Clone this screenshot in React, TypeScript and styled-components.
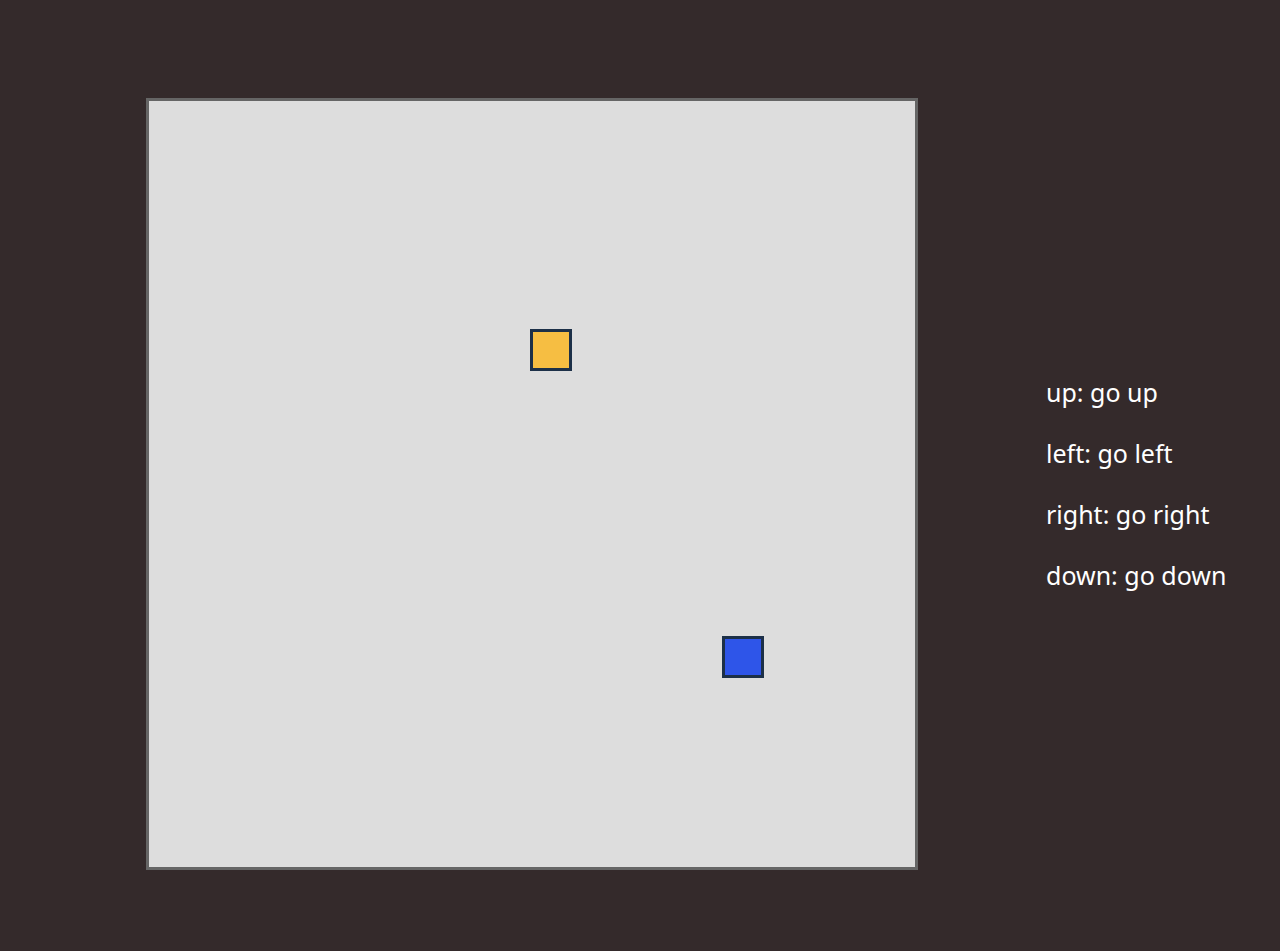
import React from 'react';
import styled, { createGlobalStyle } from 'styled-components';

const GlobalStyle = createGlobalStyle`
  html, body {
    margin: 0;
    padding: 0;
    background: #342a2b;
  }
  body {
    font-family: "Noto Sans", "Liberation Sans", sans-serif;
  }
`;

const commands = [
  { key: 'up', label: 'go up' },
  { key: 'left', label: 'go left' },
  { key: 'right', label: 'go right' },
  { key: 'down', label: 'go down' },
];

const App: React.FC = () => {
  return (
    <Root>
      <GlobalStyle />
      <Board>
        <Cell x={381} y={228} color="#f6be42" />
        <Cell x={573} y={535} color="#2e55e9" />
      </Board>
      <Legend>
        {commands.map((c) => (
          <Line key={c.key}>
            {c.key}: {c.label}
          </Line>
        ))}
      </Legend>
    </Root>
  );
};

export default App;

const Root = styled.div`
  display: flex;
  align-items: center;
  gap: 128px;
  height: 951px;
  box-sizing: border-box;
  padding: 98px 0 81px 146px;
`;

const Board = styled.div`
  position: relative;
  width: 772px;
  height: 772px;
  box-sizing: border-box;
  border: 3px solid #656565;
  background: #dddddd;
  flex-shrink: 0;
`;

const Cell = styled.div<{ x: number; y: number; color: string }>`
  position: absolute;
  left: ${(p) => p.x}px;
  top: ${(p) => p.y}px;
  width: 42px;
  height: 42px;
  box-sizing: border-box;
  border: 3px solid #1c3048;
  background: ${(p) => p.color};
`;

const Legend = styled.div`
  display: flex;
  flex-direction: column;
  gap: 26px;
  color: #ffffff;
  font-size: 25px;
  line-height: 35px;
`;

const Line = styled.div`
  white-space: nowrap;
`;
